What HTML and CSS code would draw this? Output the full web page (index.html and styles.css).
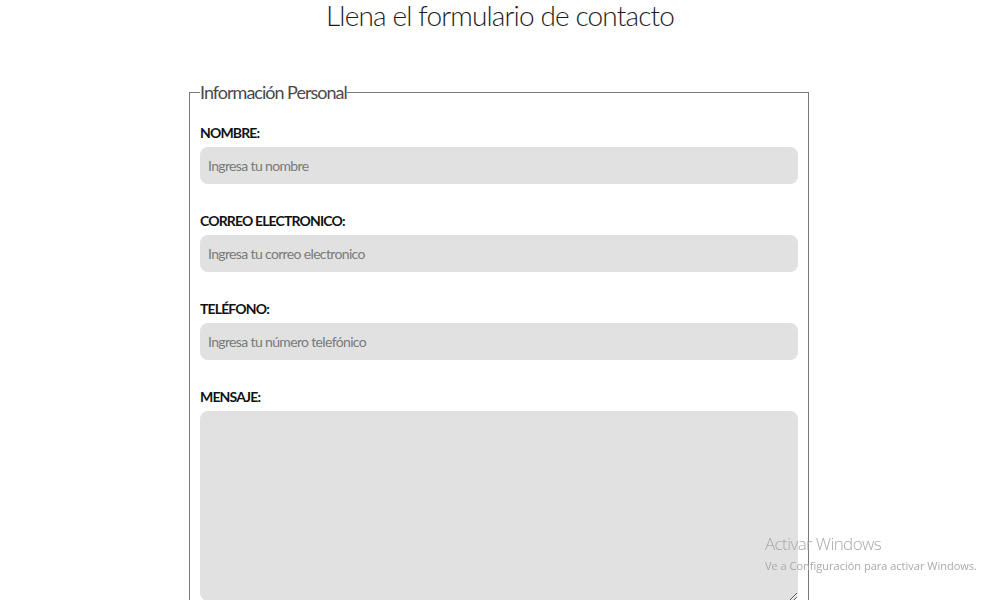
FILE: index.html
```html
<!DOCTYPE html>
<html lang="es">
<head>
<meta charset="utf-8">
<title>Contacto</title>
<link rel="stylesheet" href="styles.css">
</head>
<body>
<h1 class="title">Llena el formulario de contacto</h1>
<form class="form">
  <fieldset class="group">
    <legend class="legend">Información Personal</legend>
    <div class="field">
      <label class="label" for="nombre">NOMBRE:</label>
      <input class="input" id="nombre" type="text" placeholder="Ingresa tu nombre">
    </div>
    <div class="field">
      <label class="label" for="correo">CORREO ELECTRONICO:</label>
      <input class="input" id="correo" type="email" placeholder="Ingresa tu correo electronico">
    </div>
    <div class="field">
      <label class="label" for="tel">TELÉFONO:</label>
      <input class="input" id="tel" type="tel" placeholder="Ingresa tu número telefónico">
    </div>
    <div class="field">
      <label class="label" for="msg">MENSAJE:</label>
      <textarea class="input textarea" id="msg"></textarea>
    </div>
  </fieldset>
</form>
<div class="watermark">
  <div class="wm-title">Activar Windows</div>
  <div class="wm-sub">Ve a Configuración para activar Windows.</div>
</div>
</body>
</html>
```

FILE: styles.css
```css
html, body {
  margin: 0;
  padding: 0;
  background: #ffffff;
}

body {
  font-family: Lato, "Noto Sans", sans-serif;
  color: #000;
}

.title {
  margin: 0;
  padding-top: 1px;
  text-align: center;
  font-family: Lato, sans-serif;
  font-weight: 300;
  font-size: 28px;
  line-height: 28px;
  letter-spacing: -0.85px;
  color: #1e1e1e;
}

.form {
  margin: 52px 0 0;
  padding-right: 2px;
}

.group {
  width: 620px;
  box-sizing: border-box;
  margin: 0 auto;
  padding: 21px 10px 20px;
  border: 1px solid #7a7a7a;
  min-width: 0;
}

.legend {
  padding: 0;
  margin: 0;
  font-family: Lato, sans-serif;
  font-size: 18px;
  font-weight: 400;
  letter-spacing: -1px;
  color: #4a4a4a;
}

.field {
  display: flex;
  flex-direction: column;
  margin-bottom: 28px;
}

.label {
  display: block;
  font-family: Lato, sans-serif;
  font-weight: 700;
  font-size: 14px;
  line-height: 17px;
  letter-spacing: -0.85px;
  margin-bottom: 6px;
  color: #111;
}

.input {
  display: block;
  box-sizing: border-box;
  width: 100%;
  height: 37px;
  border: none;
  border-radius: 8px;
  background: #e1e1e1;
  padding: 0 8px;
  font-family: Lato, sans-serif;
  font-size: 14px;
  letter-spacing: -0.65px;
  color: #333;
  outline: none;
}

.input::placeholder {
  color: #7a7a7a;
}

.textarea {
  height: 190px;
  resize: vertical;
  padding: 8px;
}

.watermark {
  position: fixed;
  left: 765px;
  top: 533px;
  color: #a9a9a9;
  font-family: "Open Sans", "Noto Sans", sans-serif;
  pointer-events: none;
}

.wm-title {
  font-size: 17px;
  font-weight: 300;
  line-height: 22px;
  letter-spacing: -0.6px;
}

.wm-sub {
  font-size: 11px;
  line-height: 16px;
  margin-top: 3px;
}
```
